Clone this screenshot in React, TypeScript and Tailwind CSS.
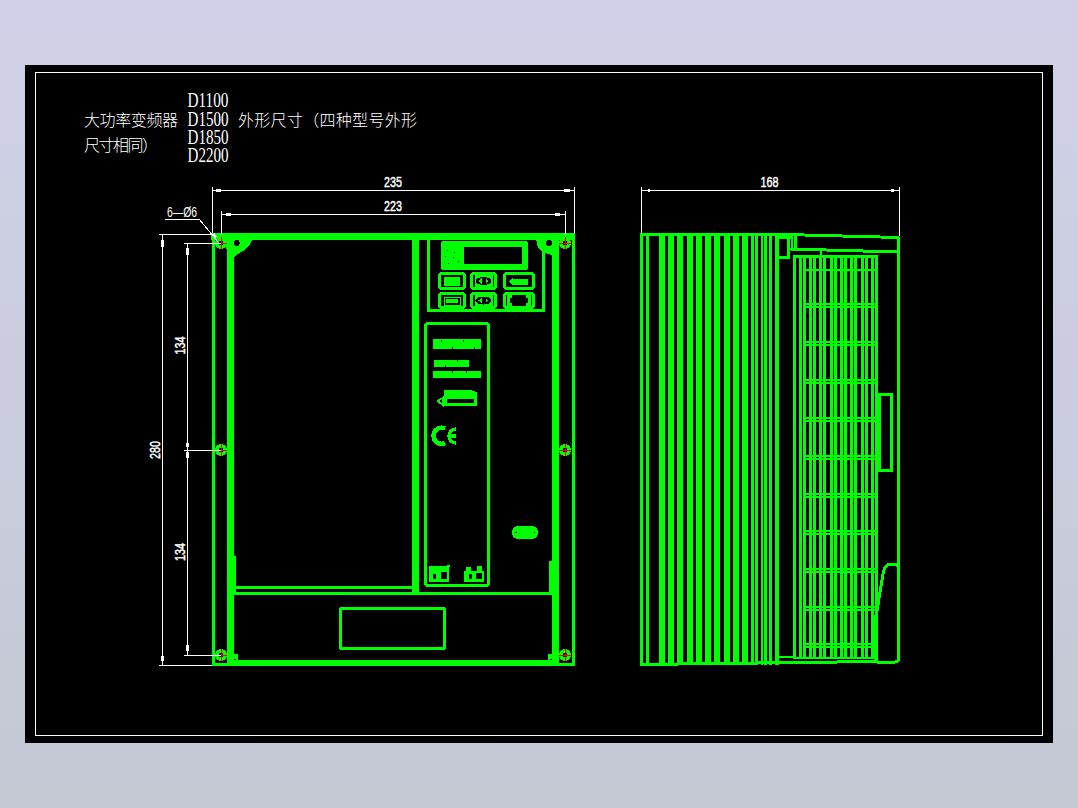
const G = "#00ff00";
const W = "#ffffff";
const R = "#ff0000";

const holes: [number, number][] = [
  [221, 243], [565, 243], [221, 450], [565, 450], [221, 655], [565, 655],
];

const fins: [number, number][] = [
  [640, 3], [646, 3], [659, 6], [668, 6], [677, 6], [687, 6], [696, 6],
  [705, 6], [714, 6], [724, 6], [733, 6], [742, 6], [751, 3], [755, 3],
  [761, 2], [764, 3], [769, 3], [775, 4],
];

const grille = [793, 799, 803, 809, 813, 819, 823, 830, 834, 840, 844, 850, 854, 861, 865, 871, 875];
const bars = [305, 343, 381, 419, 457, 495, 532, 570, 608, 645];

function Hole({ x, y }: { x: number; y: number }) {
  return (
    <g>
      <circle cx={x} cy={y} r={6} fill={G} />
      <circle cx={x} cy={y} r={2.5} fill="#000" />
      <path d={`M${x - 6} ${y}H${x + 6}M${x} ${y - 6}V${y + 6}`} stroke={R} strokeWidth={1} />
    </g>
  );
}

function Dim({ x, y, t, rot }: { x: number; y: number; t: string; rot?: boolean }) {
  return (
    <text
      x={x}
      y={y}
      fill={W}
      stroke={W}
      strokeWidth={0.45}
      fontFamily="'Liberation Sans', sans-serif"
      fontSize={15}
      textAnchor="middle"
      textLength={18}
      lengthAdjust="spacingAndGlyphs"
      transform={rot ? `rotate(-90 ${x} ${y})` : undefined}
    >
      {t}
    </text>
  );
}

function Key({ x, y, w, h }: { x: number; y: number; w: number; h: number }) {
  return <rect x={x} y={y} width={w} height={h} rx={2.5} fill="none" stroke={G} strokeWidth={3} />;
}

function Eye({ cx, cy }: { cx: number; cy: number }) {
  return (
    <g>
      <rect x={cx - 9} y={cy - 6} width={18} height={12} fill={G} />
      <ellipse cx={cx} cy={cy} rx={8} ry={4} fill="#000" />
      <path d={`M${cx - 5} ${cy}l3 -2.6v5.2zM${cx + 5} ${cy}l-3 -2.6v5.2z`} fill={G} />
    </g>
  );
}

function Front() {
  return (
    <g>
      {/* outer plate */}
      <path d="M213.5 234V664.5H573.5V234" fill="none" stroke={G} strokeWidth={3} />
      <rect x={211} y={233} width={364} height={7} fill={G} />
      {/* heavy frame */}
      <rect x={227} y={233} width={7} height={433} fill={G} />
      <rect x={552} y={233} width={7} height={433} fill={G} />
      <rect x={227} y={660} width={332} height={6} fill={G} />
      {/* corner gussets */}
      <path d="M226 238H253L250 244L245 250L236 255L233 259H227Z" fill={G} />
      <path d="M536 238H559V256L552 255L543 252.5L538 248Z" fill={G} />
      <circle cx={236.7} cy={243} r={3} fill="#000" />
      <circle cx={549} cy={243} r={3} fill="#000" />
      {/* window */}
      <rect x={412} y={233} width={7} height={362} fill={G} />
      <rect x={236} y={586} width={176} height={3} fill={G} />
      <rect x={233} y={592} width={320} height={3} fill={G} />
      <rect x={233} y={556} width={3} height={36} fill={G} />
      <rect x={549} y={561} width={4} height={32} fill={G} />
      <path d="M233 654Q233 660 238 660V654Z" fill={G} />
      <path d="M553 654Q553 660 548 660V654Z" fill={G} />
      <rect x={340.5} y={608.5} width={104} height={40} rx={1.5} fill="none" stroke={G} strokeWidth={3} />
      {/* keypad housing */}
      <path d="M428.5 239V310.5H543.5V250" fill="none" stroke={G} strokeWidth={3} />
      <rect x={441} y={241} width={87} height={29} rx={3} fill={G} />
      <rect x={464} y={247} width={58} height={17} fill="#000" />
      <path d="M447 250h1M454 252h1M445 256h1M453 257h1M448 263h1M458 261h1" stroke="#000" strokeWidth={1} />
      {/* keys */}
      <Key x={439.5} y={273.5} w={25} h={15} />
      <Key x={471.5} y={273.5} w={24} h={15} />
      <Key x={504.5} y={273.5} w={29} h={15} />
      <Key x={439.5} y={293.5} w={25} h={14} />
      <Key x={471.5} y={293.5} w={24} h={14} />
      <Key x={504.5} y={293.5} w={29} h={14} />
      <rect x={444} y={277} width={16} height={9} fill={G} />
      <rect x={444} y={297} width={16} height={8} fill="none" stroke={G} strokeWidth={1} />
      <rect x={446} y={299} width={12} height={4} fill={G} />
      <Eye cx={483.5} cy={281} />
      <Eye cx={483.5} cy={300.5} />
      <path d="M509 281l4-4v1.5h15v6h-15v1.5z" fill={G} />
      <path d="M512 296.5h-3.5v8h3.5M526 296.5h3.5v8h-3.5" fill="none" stroke={G} strokeWidth={3} />
      {/* label panel */}
      <rect x={425.5} y={323.5} width={63} height={262} rx={2.5} fill="none" stroke={G} strokeWidth={3} />
      <rect x={433} y={339} width={48} height={10} fill={G} />
      <path d="M441 340v2M452 347v2M463 340v2M474 347v2" stroke="#000" strokeWidth={1} />
      <rect x={434} y={360} width={35} height={7} rx={1.5} fill={G} />
      <rect x={433} y={371} width={48} height={7} rx={1.5} fill={G} />
      <path d="M445 365v2M452 371v2M466 371v2M457 360v2" stroke="#000" strokeWidth={1} />
      {/* arrow */}
      <path d="M444 396V390H470L477 392V406H444V407L436 401Z" fill={G} />
      <rect x={447} y={399} width={27} height={4} fill="#000" />
      <path d="M439 401l3-2.5v5z" fill="#000" />
      {/* CE */}
      <path d="M445 428.5A8 8 0 1 0 445 443" fill="none" stroke={G} strokeWidth={4.5} />
      <path d="M456 429A7 7 0 0 0 456 443M449 436H456" fill="none" stroke={G} strokeWidth={3.4} />
      {/* small marks */}
      <rect x={429} y={566} width={20} height={16} fill={G} />
      <path d="M450 566h-2v5" stroke={G} strokeWidth={2} fill="none" />
      <rect x={433} y={574} width={3} height={5} fill="#000" />
      <rect x={441} y={572} width={6} height={7} fill="#000" />
      <rect x={464} y={571} width={20} height={11} fill={G} />
      <path d="M466 567h5v5h-5zM477 566h5v5h-5z" fill={G} />
      <rect x={469} y={574} width={3} height={5} fill="#000" />
      <rect x={476} y={573} width={6} height={6} fill="#000" />
      {/* pill */}
      <rect x={512} y={526} width={26} height={13} rx={6} fill={G} />
      <circle cx={516} cy={532.5} r={0.7} fill="#000" />
      <circle cx={534.5} cy={532.5} r={0.7} fill="#000" />
      {holes.map(([x, y]) => (
        <Hole key={`${x}-${y}`} x={x} y={y} />
      ))}
    </g>
  );
}

function Side() {
  return (
    <g>
      {fins.map(([x, w]) => (
        <rect key={x} x={x} y={234} width={w} height={431} fill={G} />
      ))}
      {/* top and bottom outlines */}
      <path d="M640 234.5L785 234.5L899 237.5" fill="none" stroke={G} strokeWidth={3} />
      <path d="M640 664.5L877 661.5" fill="none" stroke={G} strokeWidth={3} />
      <rect x={897} y={237} width={3} height={424} fill={G} />
      <path d="M877 662H895Q898.5 662 898.5 658" fill="none" stroke={G} strokeWidth={3} />
      {/* lip */}
      <path d="M779 237.5H792M788.5 237V258M792 236V250.5M795.5 236V250M779 257.5H790" fill="none" stroke={G} strokeWidth={2.4} />
      <path d="M790 249L899 252" fill="none" stroke={G} strokeWidth={3} />
      <rect x={820} y={250} width={2} height={5} fill={G} />
      {/* louvres */}
      <path d="M793 256H877" stroke={G} strokeWidth={3} />
      <rect x={803} y={269} width={74} height={2} fill={G} />
      {bars.map((y) => (
        <g key={y}>
          <rect x={803} y={y - 2} width={74} height={2} fill={G} />
          <rect x={803} y={y + 1} width={74} height={2} fill={G} />
        </g>
      ))}
      {grille.map((x) => (
        <rect key={x} x={x} y={255} width={3} height={403} fill={G} />
      ))}
      <path d="M778 657H793M793 658H876" fill="none" stroke={G} strokeWidth={2} />
      {/* handle */}
      <path d="M876 615V662" stroke={G} strokeWidth={4} />
      <path d="M875.8 618L883 574Q884.5 564 891 564H893Q898 564 898.5 569" fill="none" stroke={G} strokeWidth={3} />
      {/* slot */}
      <rect x={879.5} y={394.5} width={12} height={76} fill="none" stroke={G} strokeWidth={3} />
    </g>
  );
}

function Dims() {
  const tick = (d: string) => <path d={d} stroke={W} strokeWidth={3} />;
  return (
    <g>
      <path
        d="M212 187V233M574 187V233M212 190H574M221.5 211V235M565 211V235M221.5 214H565M641 186.5V233M899.5 186.5V236M641 190.5H899.5M165 219.5H199.5L218 242M159 234.5H212M162 234.5V665M159 665.5H212M184 243.5H221M187 243.5V655M184 655.5H221M184 450H221"
        fill="none"
        stroke={W}
        strokeWidth={1}
      />
      {tick("M216 190H221M564 190H570M226 214H231M555 214H560M648 190.5H650M891 190.5H894M162 240V247M162 656V661M187 248V255M187 443V447M187 452V458M187 645V651M213 234l3 3.5")}
      <Dim x={393} y={187} t="235" />
      <Dim x={393} y={211} t="223" />
      <Dim x={769.5} y={186.5} t="168" />
      <Dim x={159.5} y={450} t="280" rot />
      <Dim x={185} y={345.5} t="134" rot />
      <Dim x={185} y={552} t="134" rot />
      <text
        x={167}
        y={216.5}
        fill={W}
        fontFamily="'Liberation Sans', 'DejaVu Sans', sans-serif"
        fontSize={15}
        textLength={30}
        lengthAdjust="spacingAndGlyphs"
      >
        6—Ø6
      </text>
    </g>
  );
}

function Notes() {
  const cjk = "'Noto Sans CJK SC', sans-serif";
  const ser = "'Liberation Serif', serif";
  const models: [string, number][] = [
    ["D1100", 107], ["D1500", 126], ["D1850", 144], ["D2200", 162],
  ];
  return (
    <g fill={W}>
      <text x={84} y={126} fontFamily={cjk} fontWeight={300} fontSize={16} textLength={94}>大功率变频器</text>
      <text x={84} y={151} fontFamily={cjk} fontWeight={300} fontSize={16} textLength={74}>尺寸相同）</text>
      <text x={238} y={126} fontFamily={cjk} fontWeight={300} fontSize={16} textLength={179}>外形尺寸（四种型号外形</text>
      {models.map(([t, y]) => (
        <text key={t} x={187.5} y={y} fontFamily={ser} fontSize={21} textLength={41} lengthAdjust="spacingAndGlyphs">
          {t}
        </text>
      ))}
    </g>
  );
}

export default function App() {
  return (
    <div className="h-[808px] w-[1078px] bg-gradient-to-b from-[#d0d1e8] to-[#c4c8d3] pt-[65px] pl-[25px]">
      <div className="h-[678px] w-[1028px] bg-black px-[10px] pt-[7px]">
        <div className="h-[664px] w-[1008px] border border-white">
          <svg viewBox="36 73 1006 662" className="block h-full w-full" shapeRendering="crispEdges">
            <Notes />
            <Front />
            <Side />
            <Dims />
          </svg>
        </div>
      </div>
    </div>
  );
}
